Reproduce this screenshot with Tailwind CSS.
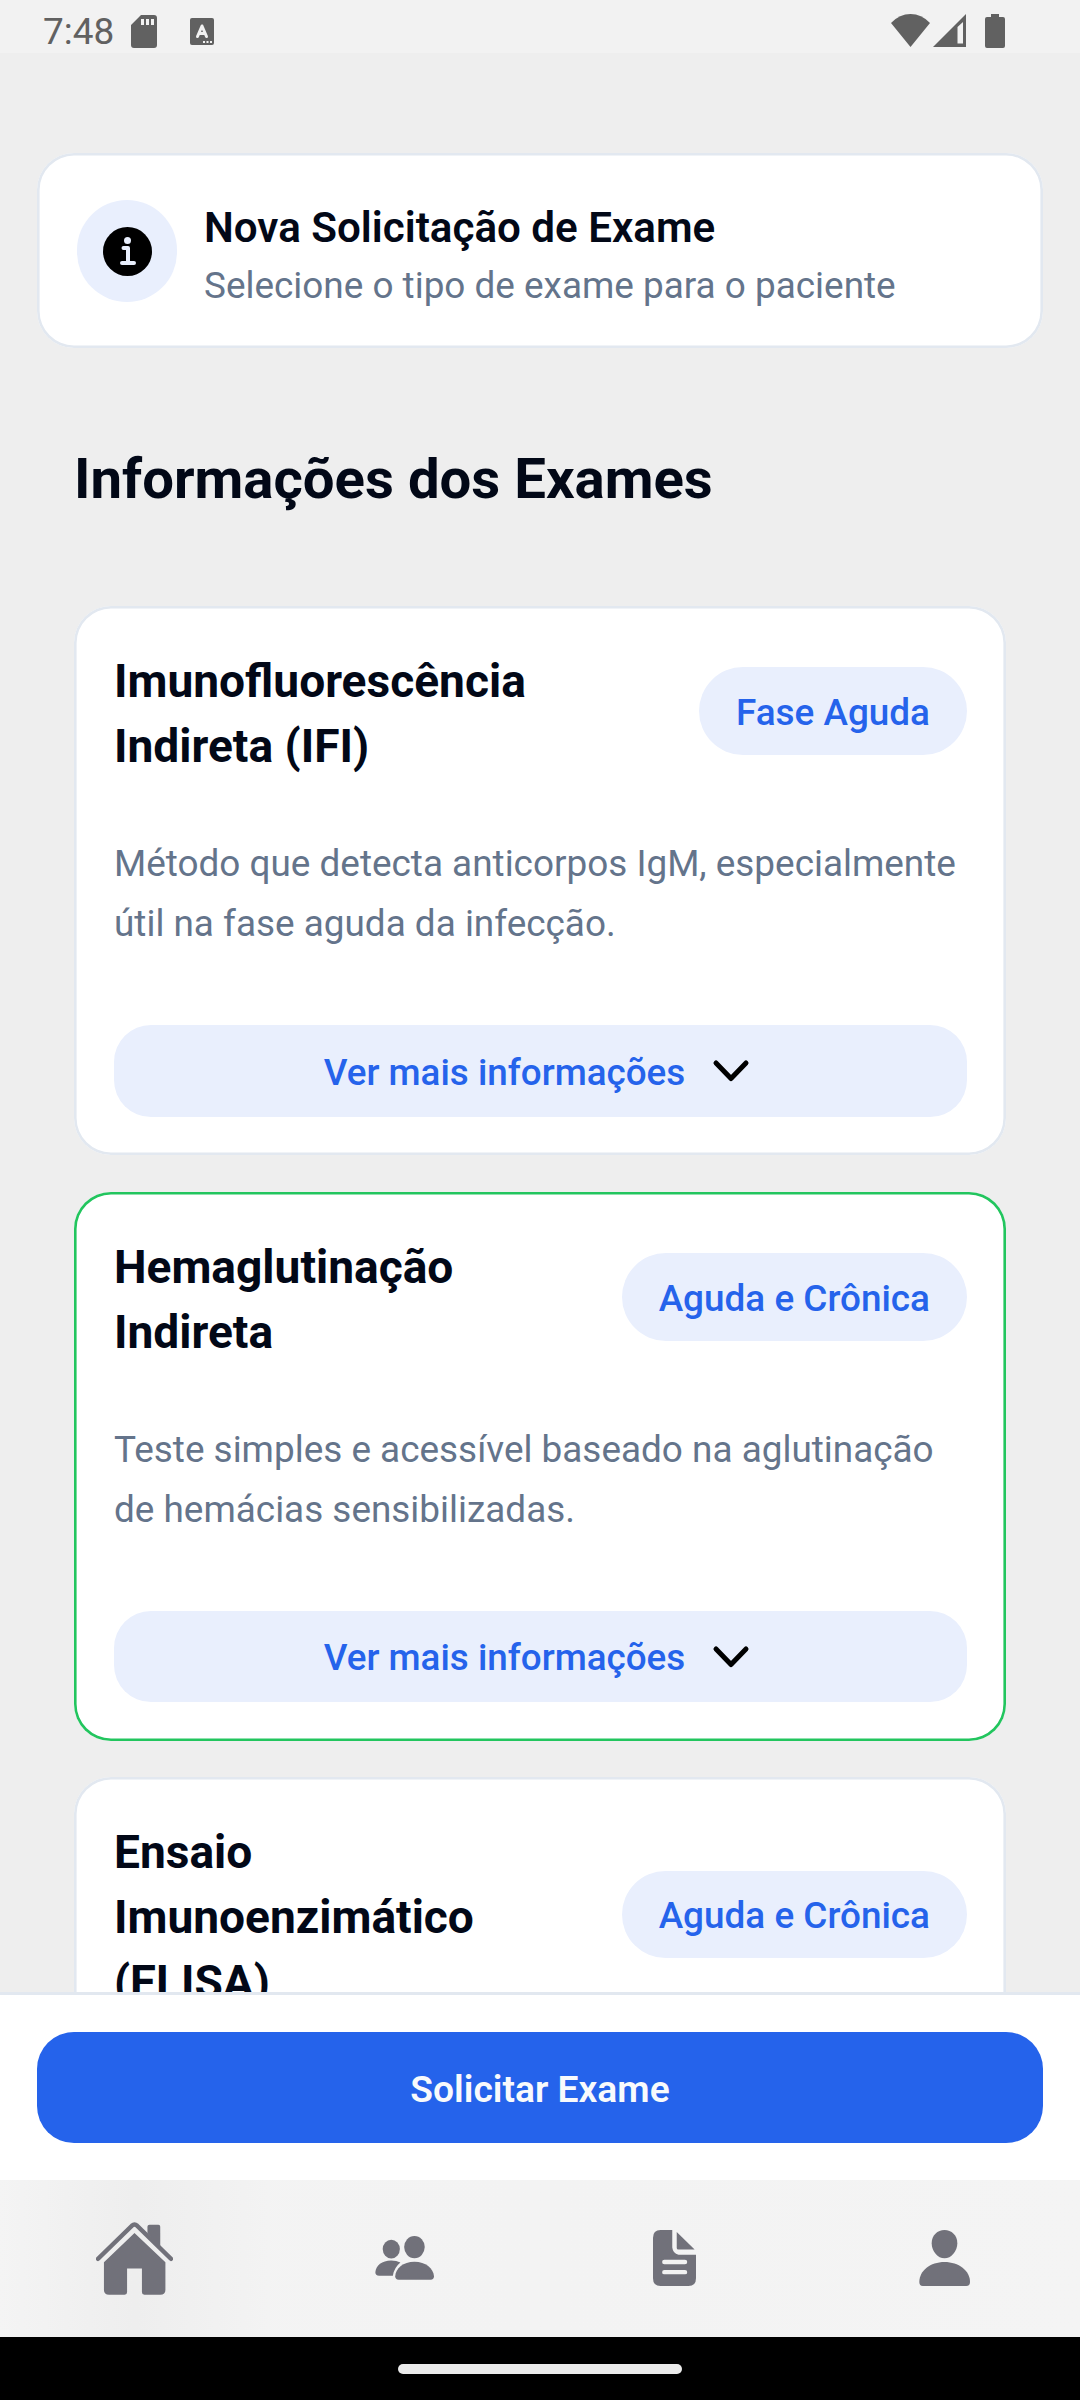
<!DOCTYPE html>
<html lang="pt-BR">
<head>
<meta charset="utf-8">
<title>Nova Solicitação de Exame</title>
<script src="https://cdn.jsdelivr.net/npm/@tailwindcss/browser@4"></script>
</head>
<body class="bg-[#eeeeee] font-['Roboto',sans-serif] text-[#020817]">
<div class="flex h-[2400px] w-[1080px] flex-col overflow-hidden">

  <!-- Status bar -->
  <header class="flex h-[53px] shrink-0 items-start bg-[#f2f2f2] pl-[43px] pr-[75px] text-[#616161]">
    <span class="w-[88px] pt-[10px] text-[36.900px] leading-[43px]">7:48</span>
    <svg class="mt-[15px] h-[33px] w-[26px]" viewBox="0 0 26 33" fill="currentColor"><path fill-rule="evenodd" d="M10 0H23Q26 0 26 3V30Q26 33 23 33H3Q0 33 0 30V10ZM10 4V10H13V4ZM15 4V10H18V4ZM20 4V10H23V4Z"/></svg>
    <svg class="ml-[33px] mt-[18px] h-[27px] w-[24px]" viewBox="0 0 24 27"><rect width="24" height="27" rx="2" fill="#616161"/><path d="M7.500 18.500L12 8L16.500 18.500M9 15.500H15" fill="none" stroke="#f2f2f2" stroke-width="3" stroke-linecap="round" stroke-linejoin="round"/><path d="M13 23h2v2h-2zM16.500 23h2v2h-2zM20 23h2v2h-2z" fill="#f2f2f2"/></svg>
    <div class="ml-auto flex">
      <svg class="mt-[14px] h-[33px] w-[39px]" viewBox="0 0 39 33" fill="currentColor"><path d="M0 9Q8.500 0 19.500 0T39 9L19.500 33Z"/></svg>
      <svg class="ml-[3px] mt-[14px] h-[33px] w-[33px]" viewBox="0 0 33 33" fill="currentColor"><path fill-rule="evenodd" d="M33 0V33H0ZM30 8L24.500 13V29.500H30Z"/></svg>
      <svg class="ml-[19px] mt-[14px] h-[34px] w-[20px]" viewBox="0 0 20 34" fill="currentColor"><path d="M6 0H14V3H18Q20 3 20 5V32Q20 34 18 34H2Q0 34 0 32V5Q0 3 2 3H6Z"/></svg>
    </div>
  </header>

  <main class="h-[1939px] shrink-0 overflow-hidden pt-[100px]">
    <section class="mx-[37px] flex h-[194.500px] items-start gap-[27px] rounded-[37px] bg-white pl-[40px] pt-[47px] shadow-[inset_0_0_0_2.600px_#e2e8f0]">
      <div class="flex h-[102px] w-[100px] items-center justify-center rounded-full bg-[#e9effd]">
        <svg class="size-[49px]" viewBox="0 0 49 49"><circle cx="24.500" cy="24.500" r="24.500" fill="#000"/><circle cx="24.500" cy="13.500" r="3.500" fill="#e9effd"/><path d="M20.500 21H25V36M19 36H31" fill="none" stroke="#e9effd" stroke-width="4" stroke-linecap="round" stroke-linejoin="round"/></svg>
      </div>
      <div class="-mt-px">
        <h1 class="text-[42.150px] font-semibold leading-[57px]">Nova Solicitação de Exame</h1>
        <p class="pt-[2px] text-[36.900px] leading-[56px] text-[#64748b]">Selecione o tipo de exame para o paciente</p>
      </div>
    </section>

    <h2 class="mb-[91px] ml-[74px] mt-[95.500px] text-[56.300px] font-bold leading-[72px]">Informações dos Exames</h2>

    <div class="mx-[74px] flex flex-col gap-[37px]">
      <article class="h-[549px] rounded-[37px] bg-white pl-[40px] pr-[39px] pt-[42.700px] shadow-[inset_0_0_0_2.600px_#e2e8f0]">
        <div class="flex items-center justify-between">
          <h3 class="text-[46.100px] font-bold leading-[65px]">Imunofluorescência<br>Indireta (IFI)</h3>
          <span class="mb-[5px] flex h-[88px] items-center rounded-full bg-[#e9effd] px-[37px] pt-[3px] text-[36.900px] font-medium text-[#2563eb]">Fase Aguda</span>
        </div>
        <p class="mt-[55.400px] whitespace-nowrap text-[36.900px] leading-[60px] text-[#64748b]">Método que detecta anticorpos IgM, especialmente<br>útil na fase aguda da infecção.</p>
        <button class="mt-[71px] flex h-[92px] w-full items-center justify-center gap-[20px] rounded-[37px] bg-[#e9effd] text-[36.800px] font-medium text-[#2563eb]">
          <span class="pt-[3px]">Ver mais informações</span>
          <svg class="h-[52px] w-[52px]" viewBox="0 0 52 52" fill="none" stroke="#000" stroke-width="5" stroke-linecap="round" stroke-linejoin="round"><path d="M11 18L26 33.500L41 18"/></svg>
        </button>
      </article>

      <article class="h-[549px] rounded-[37px] bg-white pl-[40px] pr-[39px] pt-[42.700px] shadow-[inset_0_0_0_2.600px_#22c55e]">
        <div class="flex items-center justify-between">
          <h3 class="text-[46.100px] font-bold leading-[65px]">Hemaglutinação<br>Indireta</h3>
          <span class="mb-[5px] flex h-[88px] items-center rounded-full bg-[#e9effd] px-[37px] pt-[3px] text-[36.900px] font-medium text-[#2563eb]">Aguda e Crônica</span>
        </div>
        <p class="mt-[55.400px] whitespace-nowrap text-[36.900px] leading-[60px] text-[#64748b]">Teste simples e acessível baseado na aglutinação<br>de hemácias sensibilizadas.</p>
        <button class="mt-[71px] flex h-[91px] w-full items-center justify-center gap-[20px] rounded-[37px] bg-[#e9effd] text-[36.800px] font-medium text-[#2563eb]">
          <span class="pt-[3px]">Ver mais informações</span>
          <svg class="h-[52px] w-[52px]" viewBox="0 0 52 52" fill="none" stroke="#000" stroke-width="5" stroke-linecap="round" stroke-linejoin="round"><path d="M11 18L26 33.500L41 18"/></svg>
        </button>
      </article>

      <article class="-mt-px h-[549px] rounded-[37px] bg-white pl-[40px] pr-[39px] pt-[43px] shadow-[inset_0_0_0_2.600px_#e2e8f0]">
        <div class="flex items-center justify-between">
          <h3 class="text-[46.100px] font-bold leading-[65px]">Ensaio<br>Imunoenzimático<br>(ELISA)</h3>
          <span class="mb-[6px] flex h-[87px] items-center rounded-full bg-[#e9effd] px-[37px] pt-[3px] text-[36.900px] font-medium text-[#2563eb]">Aguda e Crônica</span>
        </div>
      </article>
    </div>
  </main>

  <div class="h-[188px] shrink-0 border-t-[3px] border-[#e2e8f0] bg-white px-[37px] pt-[37px]">
    <button class="flex h-[111px] w-full items-center justify-center rounded-[37px] bg-[#2563eb] pt-[5px] text-[37.200px] font-semibold text-slate-50">Solicitar Exame</button>
  </div>

  <nav class="grid h-[157px] shrink-0 grid-cols-4 place-items-center bg-linear-to-r from-[#f4f4f4] via-[#f3f3f3] to-[#f4f4f4] text-[#71717a]">
    <div class="flex h-full w-full items-center justify-center bg-linear-to-r from-[#f4f4f4] via-[#eeeeee] to-[#f3f3f3] pb-px pr-px">
      <svg class="h-[73px] w-[77px]" viewBox="279 185 223 218" preserveAspectRatio="none" fill="currentColor"><path d="M285 295L383 196Q390.500 189 398 196L496 295" fill="none" stroke="currentColor" stroke-width="13" stroke-linecap="round" stroke-linejoin="round"/><path d="M428 218V199Q428 193 434 193H460Q465 193 465 199V262Z"/><path d="M390.500 218L480 305V388Q480 402 465 402H419Q412 402 412 395V324H369V395Q369 402 362 402H317Q302 402 302 388V305Z"/></svg>
    </div>
    <svg class="mb-px mr-[2px] h-[44px] w-[59px]" viewBox="1088 230 172 131" preserveAspectRatio="none" fill="currentColor"><ellipse cx="1135.500" cy="269" rx="25" ry="28"/><ellipse cx="1203" cy="263" rx="30" ry="33"/><path d="M1089 338C1091 318 1108 303 1135 303Q1151 303 1162 309Q1144 324 1140 348H1100Q1089 348 1089 338Z"/><path d="M1147 350C1148 327 1170 307 1203 307S1258 327 1260 350Q1260 360 1250 360H1157Q1147 360 1147 350Z"/></svg>
    <svg class="mb-px mr-[2px] h-[56px] w-[43px]" viewBox="328 212 125 166" preserveAspectRatio="none"><path fill="currentColor" d="M350 212H384V264Q386 282 402 285H453V355Q453 378 431 378H350Q328 378 328 355V235Q328 212 350 212ZM397 218L449 270H402Q397 270 397 265Z"/><path d="M361 307H421M361 337H421" stroke="#f2f2f2" stroke-width="13" stroke-linecap="round"/></svg>
    <svg class="mb-px mr-[2px] h-[56px] w-[51px]" viewBox="1100 212 149 166" preserveAspectRatio="none" fill="currentColor"><path d="M1137 251C1137 228 1154 212 1174.500 212S1212 228 1212 251C1212 274 1194 296 1174.500 296S1137 274 1137 251Z"/><path d="M1101 366C1101 333 1133 307 1174.500 307S1249 333 1249 366Q1249 378 1238 378H1111Q1101 378 1101 366Z"/></svg>
  </nav>

  <footer class="flex h-[63px] shrink-0 justify-center bg-black pt-[27px]">
    <div class="h-[10px] w-[284px] rounded-full bg-[#ebebeb]"></div>
  </footer>
</div>
</body>
</html>
